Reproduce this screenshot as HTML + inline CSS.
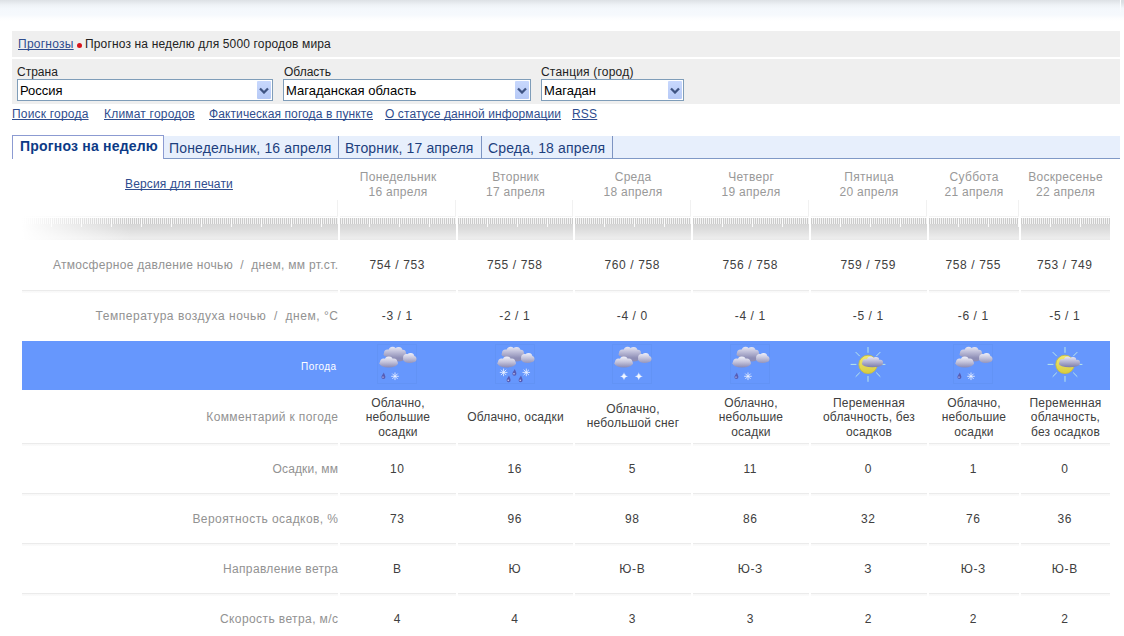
<!DOCTYPE html>
<html><head><meta charset="utf-8">
<style>
*{margin:0;padding:0;box-sizing:border-box}
html,body{width:1124px;height:636px;overflow:hidden;background:#fff}
body{position:relative;font-family:"Liberation Sans",sans-serif;font-size:12px;color:#000}
.a{position:absolute;white-space:nowrap;line-height:14px}
.top{position:absolute;left:0;top:0;width:1124px;height:21px;background:linear-gradient(#dde1e5 0px,#e4e8ec 2px,#eef2f6 5px,#f4f8fc 9px,#f6f9fd 15px,#fcfdfe 18px,#fff 21px)}
.bar{position:absolute;left:12px;width:1108px;background:#efefef}
a,.lnk{color:#2f4d8e;text-decoration:underline;text-decoration-skip-ink:none}
.sel{position:absolute;top:79px;height:22px;border:1px solid #7f9db9;background:#fff}
.sel .t{position:absolute;left:2px;top:3px;font-size:13px;line-height:15px;color:#000}
.sel .b{position:absolute;right:1px;top:1px;width:14px;height:18px;background:linear-gradient(#c8d8fd,#b6c9f6);border-radius:1px}
.sel .b svg{position:absolute;left:2px;top:6px}
.tabs{position:absolute;left:12px;top:136px;width:1108px;height:23px;background:#e7effc;border-bottom:1px solid #8099c6}
.tab{position:absolute;top:0;height:22px;font-size:14px;line-height:16px;color:#1d3f7e;padding-top:4px;letter-spacing:0.15px}
.sep{position:absolute;top:0;width:1px;height:22px;background:#7d94c2}
.act{position:absolute;left:12px;top:135px;width:152px;height:24px;background:#fff;border:1px solid #8c9bd2;border-bottom:none}
.act span{position:absolute;left:7px;top:2px;font-size:14px;font-weight:bold;line-height:16px;color:#0c3a86;letter-spacing:0.2px}
.day{position:absolute;top:170px;text-align:center;color:#999;font-size:12px;line-height:15px;letter-spacing:0.3px;text-indent:0.3px}
.rul{position:absolute;top:216px;height:24px;background:repeating-linear-gradient(90deg,#cbcbcb 0px,#cbcbcb 1px,#f3f3f3 1px,#f3f3f3 2px);}
.rul:after{content:"";position:absolute;left:0;right:0;top:8px;bottom:0;background:linear-gradient(#d6d6d6,#dcdcdc 30%,#ececec 85%,#eaeaea 100%)}
.rul:before{content:"";position:absolute;left:0;right:0;top:0;height:3px;background:linear-gradient(#f4f4f4 0px,#f4f4f4 1px,#fff 1px,#fff 2px,rgba(255,255,255,0) 2px)}
.rul i{position:absolute;left:0;right:0;top:3px;height:8px;z-index:1;background:repeating-linear-gradient(90deg,rgba(255,255,255,0) 0px,rgba(255,255,255,0) 29px,rgba(255,255,255,.9) 29px,rgba(255,255,255,.9) 30px)}
.vl{position:absolute;top:200px;width:1px;height:16px;background:#f1f1f1}
.lab{position:absolute;right:786px;text-align:right;color:#929292;font-size:12px;line-height:14px;letter-spacing:0.3px;white-space:nowrap}
.v{position:absolute;text-align:center;color:#404040;font-size:12px;line-height:14px;white-space:nowrap}
.hl{position:absolute;height:3px;background:linear-gradient(#ebebeb 0px,#ebebeb 1px,#fbfbfb 1px,#f6f6f6 2px,#fff 3px)}
.hl2{position:absolute;left:22px;width:1088px;height:2px;background:#f7f7f7}
.blue{position:absolute;left:22px;top:341px;width:1088px;height:49px;background:#6697fd}
.ic{position:absolute;top:344px;width:40px;height:40px}
</style></head><body>
<div class="top"></div>
<div style="position:absolute;left:1120px;top:0;width:1px;height:16px;background:linear-gradient(#fff 0px,#fafcfe 8px,rgba(255,255,255,0) 16px)"></div>
<div style="position:absolute;left:1121px;top:0;width:3px;height:8px;background:linear-gradient(#d9dde1,rgba(230,234,238,0))"></div>

<div class="bar" style="top:31px;height:26px"></div>
<div class="a" style="left:18px;top:37px;letter-spacing:0.25px"><a>Прогнозы</a></div>
<div style="position:absolute;left:77px;top:43px;width:5px;height:5px;border-radius:50%;background:#d8141c"></div>
<div class="a" style="left:85px;top:37px;color:#222;letter-spacing:0.15px">Прогноз на неделю для 5000 городов мира</div>

<div class="bar" style="top:59px;height:45px"></div>
<div class="a" style="left:17px;top:65px;color:#222">Страна</div>
<div class="a" style="left:284px;top:65px;color:#222">Область</div>
<div class="a" style="left:541px;top:65px;color:#222;letter-spacing:0.2px">Станция (город)</div>

<div class="sel" style="left:17px;width:256px"><div class="t">Россия</div><div class="b"><svg width="10" height="7" viewBox="0 0 10 7"><path d="M1 1.5 L5 5.5 L9 1.5" fill="none" stroke="#3f5482" stroke-width="2.3"/></svg></div></div>
<div class="sel" style="left:283px;width:248px"><div class="t">Магаданская область</div><div class="b"><svg width="10" height="7" viewBox="0 0 10 7"><path d="M1 1.5 L5 5.5 L9 1.5" fill="none" stroke="#3f5482" stroke-width="2.3"/></svg></div></div>
<div class="sel" style="left:541px;width:143px"><div class="t">Магадан</div><div class="b"><svg width="10" height="7" viewBox="0 0 10 7"><path d="M1 1.5 L5 5.5 L9 1.5" fill="none" stroke="#3f5482" stroke-width="2.3"/></svg></div></div>

<div class="a" style="left:12px;top:107px;letter-spacing:0.2px"><a>Поиск города</a></div>
<div class="a" style="left:104px;top:107px;letter-spacing:0.2px"><a>Климат городов</a></div>
<div class="a" style="left:209px;top:107px;letter-spacing:0.1px"><a>Фактическая погода в пункте</a></div>
<div class="a" style="left:385px;top:107px;letter-spacing:0.1px"><a>О статусе данной информации</a></div>
<div class="a" style="left:572px;top:107px;letter-spacing:0.2px"><a>RSS</a></div>

<div class="tabs">
 <div class="tab" style="left:157px">Понедельник, 16 апреля</div>
 <div class="sep" style="left:326px"></div>
 <div class="tab" style="left:333px">Вторник, 17 апреля</div>
 <div class="sep" style="left:469px"></div>
 <div class="tab" style="left:476px">Среда, 18 апреля</div>
 <div class="sep" style="left:600px"></div>
</div>
<div class="act"><span>Прогноз на неделю</span></div>

<!-- table header -->
<div class="a" style="left:125px;top:177px;letter-spacing:0.15px"><a>Версия для печати</a></div>
<div class="day" style="left:340px;width:116px">Понедельник<br>16 апреля</div>
<div class="day" style="left:458px;width:115px">Вторник<br>17 апреля</div>
<div class="day" style="left:575px;width:116px">Среда<br>18 апреля</div>
<div class="day" style="left:693px;width:116px">Четверг<br>19 апреля</div>
<div class="day" style="left:811px;width:116px">Пятница<br>20 апреля</div>
<div class="day" style="left:929px;width:90px">Суббота<br>21 апреля</div>
<div class="day" style="left:1021px;width:89px">Воскресенье<br>22 апреля</div>

<div class="rul" style="left:22px;width:316px"><i></i></div>
<div class="rul" style="left:340px;width:116px"><i></i></div>
<div class="rul" style="left:458px;width:115px"><i></i></div>
<div class="rul" style="left:575px;width:116px"><i></i></div>
<div class="rul" style="left:693px;width:116px"><i></i></div>
<div class="rul" style="left:811px;width:116px"><i></i></div>
<div class="rul" style="left:929px;width:90px"><i></i></div>
<div class="rul" style="left:1021px;width:89px"><i></i></div>
<div class="vl" style="left:337px"></div><div class="vl" style="left:455px"></div><div class="vl" style="left:572px"></div><div class="vl" style="left:690px"></div><div class="vl" style="left:808px"></div><div class="vl" style="left:926px"></div><div class="vl" style="left:1018px"></div>
<div style="position:absolute;left:22px;top:216px;width:110px;height:24px;background:linear-gradient(90deg,#fff,rgba(255,255,255,0))"></div>

<!-- rows -->

<div class="blue"></div>
<div class="a" style="left:301px;top:359.5px;color:#fff;font-size:10px;letter-spacing:0.45px">Погода</div>


<svg width="0" height="0" style="position:absolute;left:0;top:0">
<defs>
<linearGradient id="cgB" gradientUnits="userSpaceOnUse" x1="0" y1="2" x2="0" y2="14"><stop offset="0" stop-color="#eeeef8"/><stop offset="0.5" stop-color="#bdbdd8"/><stop offset="1" stop-color="#8e8eb6"/></linearGradient>
<linearGradient id="cgR" gradientUnits="userSpaceOnUse" x1="0" y1="9" x2="0" y2="19.5"><stop offset="0" stop-color="#f0f0fa"/><stop offset="0.5" stop-color="#c2c2da"/><stop offset="1" stop-color="#9090b8"/></linearGradient>
<linearGradient id="cgF" gradientUnits="userSpaceOnUse" x1="0" y1="12.5" x2="0" y2="23.5"><stop offset="0" stop-color="#f2f2fb"/><stop offset="0.5" stop-color="#c4c4dc"/><stop offset="1" stop-color="#8a8ab4"/></linearGradient>
<linearGradient id="sunG" x1="0" y1="0" x2="0" y2="1"><stop offset="0" stop-color="#f2ea70"/><stop offset="1" stop-color="#d8cc40"/></linearGradient>
<g id="clouds">
 <g fill="url(#cgB)"><ellipse cx="17.6" cy="10.2" rx="11.2" ry="3.9"/><circle cx="10.6" cy="9" r="3.6"/><circle cx="15.6" cy="7" r="4.3"/><circle cx="21.6" cy="6.8" r="3.9"/><circle cx="25.6" cy="9" r="3.3"/><circle cx="26.6" cy="11.2" r="3"/><ellipse cx="21.5" cy="14.2" rx="6.5" ry="3.2"/></g>
 <g fill="url(#cgR)"><ellipse cx="32.6" cy="15.2" rx="6.4" ry="3.9"/><circle cx="29.6" cy="13.6" r="3.5"/><circle cx="33.6" cy="12.7" r="3.8"/><circle cx="36.6" cy="15" r="2.9"/></g>
 <g fill="url(#cgF)"><ellipse cx="11.7" cy="19.2" rx="9.3" ry="4.2"/><circle cx="6.6" cy="17.9" r="3.5"/><circle cx="11.8" cy="16.6" r="4.1"/><circle cx="16.8" cy="17.9" r="3.5"/></g>
</g>
<g id="drop"><path d="M0.4 -3.6 C0.8 -2.2 2 -0.6 2 1.1 A2 2 0 0 1 -2 1.1 C-2 -0.6 0 -2.2 0.4 -3.6Z" fill="#575cb4"/><circle cx="-0.4" cy="1.1" r="0.7" fill="#dde0ff"/></g>
<g id="flake" stroke="#f2f6ff" stroke-width="0.8" stroke-linecap="round"><path d="M-3.4 0H3.4M0 -3.4V3.4M-2.4 -2.4L2.4 2.4M-2.4 2.4L2.4 -2.4"/></g>
<g id="star"><circle r="2.2" fill="#dfe8ff" opacity="0.6"/><path d="M0 -4 L0.9 -0.9 L4 0 L0.9 0.9 L0 4 L-0.9 0.9 L-4 0 L-0.9 -0.9Z" fill="#f6f9ff"/></g>
</defs></svg>
<svg class="ic" style="left:377px" width="40" height="40" viewBox="0 0 40 40"><rect x="0.5" y="0.5" width="39" height="39" fill="none" stroke="#6293f6" stroke-width="1"/><use href="#clouds"/><use href="#drop" x="6.4" y="32"/><use href="#flake" x="18" y="32.3"/></svg>
<svg class="ic" style="left:495px" width="40" height="40" viewBox="0 0 40 40"><rect x="0.5" y="0.5" width="39" height="39" fill="none" stroke="#6293f6" stroke-width="1"/><use href="#clouds"/><use href="#flake" x="8.6" y="28.4"/><use href="#drop" x="19.4" y="28.6"/><use href="#flake" x="31.3" y="28.4"/><use href="#drop" x="13.6" y="35.2"/><use href="#drop" x="25.6" y="35.2"/></svg>
<svg class="ic" style="left:612px" width="40" height="40" viewBox="0 0 40 40"><rect x="0.5" y="0.5" width="39" height="39" fill="none" stroke="#6293f6" stroke-width="1"/><use href="#clouds"/><use href="#star" x="12" y="32.3"/><use href="#star" x="26.8" y="32.3"/></svg>
<svg class="ic" style="left:730px" width="40" height="40" viewBox="0 0 40 40"><rect x="0.5" y="0.5" width="39" height="39" fill="none" stroke="#6293f6" stroke-width="1"/><use href="#clouds"/><use href="#drop" x="6.4" y="32"/><use href="#flake" x="18" y="32.3"/></svg>
<svg class="ic" style="left:848px" width="40" height="40" viewBox="0 0 40 40"><defs><linearGradient id="cgS" gradientUnits="userSpaceOnUse" x1="0" y1="13" x2="0" y2="23.5"><stop offset="0" stop-color="#e4e4f4"/><stop offset="0.5" stop-color="#b0b0d0"/><stop offset="1" stop-color="#7a7aa8"/></linearGradient></defs><g stroke="#c8f4e4" stroke-width="1" stroke-opacity="0.85" stroke-linecap="round"><line x1="32.00" y1="20.40" x2="37.00" y2="20.40"/><line x1="28.49" y1="28.89" x2="32.02" y2="32.42"/><line x1="20.00" y1="32.40" x2="20.00" y2="37.40"/><line x1="11.51" y1="28.89" x2="7.98" y2="32.42"/><line x1="8.00" y1="20.40" x2="3.00" y2="20.40"/><line x1="11.51" y1="11.91" x2="7.98" y2="8.38"/><line x1="20.00" y1="8.40" x2="20.00" y2="3.40"/><line x1="28.49" y1="11.91" x2="32.02" y2="8.38"/></g><circle cx="20" cy="20.4" r="9.2" fill="url(#sunG)" stroke="#c8bc3c" stroke-width="0.8"/><g fill="url(#cgS)"><ellipse cx="24.4" cy="19.6" rx="10.6" ry="3.6"/><circle cx="17.6" cy="18.2" r="3.2"/><circle cx="22.6" cy="16.2" r="3.6"/><circle cx="28" cy="16.4" r="3.3"/><circle cx="32.2" cy="18.6" r="2.8"/></g></svg>
<svg class="ic" style="left:953px" width="40" height="40" viewBox="0 0 40 40"><rect x="0.5" y="0.5" width="39" height="39" fill="none" stroke="#6293f6" stroke-width="1"/><use href="#clouds"/><use href="#drop" x="6.4" y="32"/><use href="#flake" x="18" y="32.3"/></svg>
<svg class="ic" style="left:1045px" width="40" height="40" viewBox="0 0 40 40"><defs><linearGradient id="cgS" gradientUnits="userSpaceOnUse" x1="0" y1="13" x2="0" y2="23.5"><stop offset="0" stop-color="#e4e4f4"/><stop offset="0.5" stop-color="#b0b0d0"/><stop offset="1" stop-color="#7a7aa8"/></linearGradient></defs><g stroke="#c8f4e4" stroke-width="1" stroke-opacity="0.85" stroke-linecap="round"><line x1="32.00" y1="20.40" x2="37.00" y2="20.40"/><line x1="28.49" y1="28.89" x2="32.02" y2="32.42"/><line x1="20.00" y1="32.40" x2="20.00" y2="37.40"/><line x1="11.51" y1="28.89" x2="7.98" y2="32.42"/><line x1="8.00" y1="20.40" x2="3.00" y2="20.40"/><line x1="11.51" y1="11.91" x2="7.98" y2="8.38"/><line x1="20.00" y1="8.40" x2="20.00" y2="3.40"/><line x1="28.49" y1="11.91" x2="32.02" y2="8.38"/></g><circle cx="20" cy="20.4" r="9.2" fill="url(#sunG)" stroke="#c8bc3c" stroke-width="0.8"/><g fill="url(#cgS)"><ellipse cx="24.4" cy="19.6" rx="10.6" ry="3.6"/><circle cx="17.6" cy="18.2" r="3.2"/><circle cx="22.6" cy="16.2" r="3.6"/><circle cx="28" cy="16.4" r="3.3"/><circle cx="32.2" cy="18.6" r="2.8"/></g></svg>
<div class="lab" style="top:258px;letter-spacing:0.31px;margin-right:-0.31px">Атмосферное давление ночью &nbsp;/&nbsp; днем, мм рт.ст.</div>
<div class="lab" style="top:309px;letter-spacing:0.53px;margin-right:-0.53px">Температура воздуха ночью &nbsp;/&nbsp; днем, °C</div>
<div class="lab" style="top:410px;letter-spacing:0.36px;margin-right:-0.36px">Комментарий к погоде</div>
<div class="lab" style="top:462px;letter-spacing:0.15px;margin-right:-0.15px">Осадки, мм</div>
<div class="lab" style="top:512px;letter-spacing:0.43px;margin-right:-0.43px">Вероятность осадков, %</div>
<div class="lab" style="top:562px;letter-spacing:0.33px;margin-right:-0.33px">Направление ветра</div>
<div class="lab" style="top:612px;letter-spacing:0.4px;margin-right:-0.4px">Скорость ветра, м/с</div>
<div class="hl" style="top:290px;left:22px;width:316px"></div>
<div class="hl" style="top:290px;left:340px;width:116px"></div>
<div class="hl" style="top:290px;left:458px;width:115px"></div>
<div class="hl" style="top:290px;left:575px;width:116px"></div>
<div class="hl" style="top:290px;left:693px;width:116px"></div>
<div class="hl" style="top:290px;left:811px;width:116px"></div>
<div class="hl" style="top:290px;left:929px;width:90px"></div>
<div class="hl" style="top:290px;left:1021px;width:89px"></div>
<div class="hl" style="top:443px;left:22px;width:316px"></div>
<div class="hl" style="top:443px;left:340px;width:116px"></div>
<div class="hl" style="top:443px;left:458px;width:115px"></div>
<div class="hl" style="top:443px;left:575px;width:116px"></div>
<div class="hl" style="top:443px;left:693px;width:116px"></div>
<div class="hl" style="top:443px;left:811px;width:116px"></div>
<div class="hl" style="top:443px;left:929px;width:90px"></div>
<div class="hl" style="top:443px;left:1021px;width:89px"></div>
<div class="hl" style="top:493px;left:22px;width:316px"></div>
<div class="hl" style="top:493px;left:340px;width:116px"></div>
<div class="hl" style="top:493px;left:458px;width:115px"></div>
<div class="hl" style="top:493px;left:575px;width:116px"></div>
<div class="hl" style="top:493px;left:693px;width:116px"></div>
<div class="hl" style="top:493px;left:811px;width:116px"></div>
<div class="hl" style="top:493px;left:929px;width:90px"></div>
<div class="hl" style="top:493px;left:1021px;width:89px"></div>
<div class="hl" style="top:543px;left:22px;width:316px"></div>
<div class="hl" style="top:543px;left:340px;width:116px"></div>
<div class="hl" style="top:543px;left:458px;width:115px"></div>
<div class="hl" style="top:543px;left:575px;width:116px"></div>
<div class="hl" style="top:543px;left:693px;width:116px"></div>
<div class="hl" style="top:543px;left:811px;width:116px"></div>
<div class="hl" style="top:543px;left:929px;width:90px"></div>
<div class="hl" style="top:543px;left:1021px;width:89px"></div>
<div class="hl" style="top:593px;left:22px;width:316px"></div>
<div class="hl" style="top:593px;left:340px;width:116px"></div>
<div class="hl" style="top:593px;left:458px;width:115px"></div>
<div class="hl" style="top:593px;left:575px;width:116px"></div>
<div class="hl" style="top:593px;left:693px;width:116px"></div>
<div class="hl" style="top:593px;left:811px;width:116px"></div>
<div class="hl" style="top:593px;left:929px;width:90px"></div>
<div class="hl" style="top:593px;left:1021px;width:89px"></div>
<div class="v" style="left:339px;width:116px;top:258px;letter-spacing:0.6px;text-indent:0.6px">754 / 753</div>
<div class="v" style="left:457px;width:115px;top:258px;letter-spacing:0.6px;text-indent:0.6px">755 / 758</div>
<div class="v" style="left:574px;width:116px;top:258px;letter-spacing:0.6px;text-indent:0.6px">760 / 758</div>
<div class="v" style="left:692px;width:116px;top:258px;letter-spacing:0.6px;text-indent:0.6px">756 / 758</div>
<div class="v" style="left:810px;width:116px;top:258px;letter-spacing:0.6px;text-indent:0.6px">759 / 759</div>
<div class="v" style="left:928px;width:90px;top:258px;letter-spacing:0.6px;text-indent:0.6px">758 / 755</div>
<div class="v" style="left:1020px;width:89px;top:258px;letter-spacing:0.6px;text-indent:0.6px">753 / 749</div>
<div class="v" style="left:339px;width:116px;top:309px;letter-spacing:0.6px;text-indent:0.6px">-3 / 1</div>
<div class="v" style="left:457px;width:115px;top:309px;letter-spacing:0.6px;text-indent:0.6px">-2 / 1</div>
<div class="v" style="left:574px;width:116px;top:309px;letter-spacing:0.6px;text-indent:0.6px">-4 / 0</div>
<div class="v" style="left:692px;width:116px;top:309px;letter-spacing:0.6px;text-indent:0.6px">-4 / 1</div>
<div class="v" style="left:810px;width:116px;top:309px;letter-spacing:0.6px;text-indent:0.6px">-5 / 1</div>
<div class="v" style="left:928px;width:90px;top:309px;letter-spacing:0.6px;text-indent:0.6px">-6 / 1</div>
<div class="v" style="left:1020px;width:89px;top:309px;letter-spacing:0.6px;text-indent:0.6px">-5 / 1</div>
<div class="v" style="left:340px;width:116px;top:395.75px;line-height:14.5px;letter-spacing:0.2px">Облачно,<br>небольшие<br>осадки</div>
<div class="v" style="left:458px;width:115px;top:409.75px;line-height:14.5px;letter-spacing:0.2px">Облачно, осадки</div>
<div class="v" style="left:575px;width:116px;top:401.5px;line-height:14.5px;letter-spacing:0.2px">Облачно,<br>небольшой снег</div>
<div class="v" style="left:693px;width:116px;top:395.75px;line-height:14.5px;letter-spacing:0.2px">Облачно,<br>небольшие<br>осадки</div>
<div class="v" style="left:811px;width:116px;top:395.75px;line-height:14.5px;letter-spacing:0.2px">Переменная<br>облачность, без<br>осадков</div>
<div class="v" style="left:929px;width:90px;top:395.75px;line-height:14.5px;letter-spacing:0.2px">Облачно,<br>небольшие<br>осадки</div>
<div class="v" style="left:1021px;width:89px;top:395.75px;line-height:14.5px;letter-spacing:0.2px">Переменная<br>облачность,<br>без осадков</div>
<div class="v" style="left:339px;width:116px;top:462px;letter-spacing:0.6px;text-indent:0.6px">10</div>
<div class="v" style="left:457px;width:115px;top:462px;letter-spacing:0.6px;text-indent:0.6px">16</div>
<div class="v" style="left:574px;width:116px;top:462px;letter-spacing:0.6px;text-indent:0.6px">5</div>
<div class="v" style="left:692px;width:116px;top:462px;letter-spacing:0.6px;text-indent:0.6px">11</div>
<div class="v" style="left:810px;width:116px;top:462px;letter-spacing:0.6px;text-indent:0.6px">0</div>
<div class="v" style="left:928px;width:90px;top:462px;letter-spacing:0.6px;text-indent:0.6px">1</div>
<div class="v" style="left:1020px;width:89px;top:462px;letter-spacing:0.6px;text-indent:0.6px">0</div>
<div class="v" style="left:339px;width:116px;top:512px;letter-spacing:0.6px;text-indent:0.6px">73</div>
<div class="v" style="left:457px;width:115px;top:512px;letter-spacing:0.6px;text-indent:0.6px">96</div>
<div class="v" style="left:574px;width:116px;top:512px;letter-spacing:0.6px;text-indent:0.6px">98</div>
<div class="v" style="left:692px;width:116px;top:512px;letter-spacing:0.6px;text-indent:0.6px">86</div>
<div class="v" style="left:810px;width:116px;top:512px;letter-spacing:0.6px;text-indent:0.6px">32</div>
<div class="v" style="left:928px;width:90px;top:512px;letter-spacing:0.6px;text-indent:0.6px">76</div>
<div class="v" style="left:1020px;width:89px;top:512px;letter-spacing:0.6px;text-indent:0.6px">36</div>
<div class="v" style="left:339px;width:116px;top:562px;letter-spacing:0.6px;text-indent:0.6px">В</div>
<div class="v" style="left:457px;width:115px;top:562px;letter-spacing:0.6px;text-indent:0.6px">Ю</div>
<div class="v" style="left:574px;width:116px;top:562px;letter-spacing:0.6px;text-indent:0.6px">Ю-В</div>
<div class="v" style="left:692px;width:116px;top:562px;letter-spacing:0.6px;text-indent:0.6px">Ю-З</div>
<div class="v" style="left:810px;width:116px;top:562px;letter-spacing:0.6px;text-indent:0.6px">З</div>
<div class="v" style="left:928px;width:90px;top:562px;letter-spacing:0.6px;text-indent:0.6px">Ю-З</div>
<div class="v" style="left:1020px;width:89px;top:562px;letter-spacing:0.6px;text-indent:0.6px">Ю-В</div>
<div class="v" style="left:339px;width:116px;top:612px;letter-spacing:0.6px;text-indent:0.6px">4</div>
<div class="v" style="left:457px;width:115px;top:612px;letter-spacing:0.6px;text-indent:0.6px">4</div>
<div class="v" style="left:574px;width:116px;top:612px;letter-spacing:0.6px;text-indent:0.6px">3</div>
<div class="v" style="left:692px;width:116px;top:612px;letter-spacing:0.6px;text-indent:0.6px">3</div>
<div class="v" style="left:810px;width:116px;top:612px;letter-spacing:0.6px;text-indent:0.6px">2</div>
<div class="v" style="left:928px;width:90px;top:612px;letter-spacing:0.6px;text-indent:0.6px">2</div>
<div class="v" style="left:1020px;width:89px;top:612px;letter-spacing:0.6px;text-indent:0.6px">2</div>
</body></html>
